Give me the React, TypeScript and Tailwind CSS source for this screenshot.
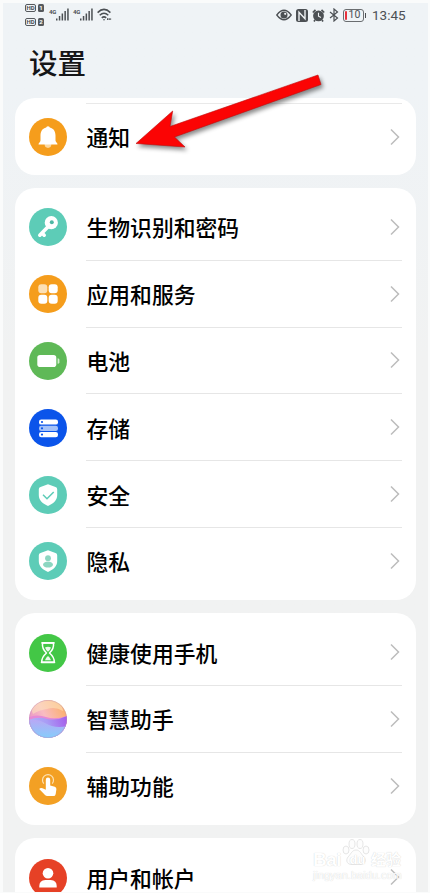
import React from 'react';

const BellIcon = () => (
  <svg viewBox="0 0 38 38" className="size-full">
    <circle cx="19" cy="19" r="19" fill="#f59d1c" />
    <circle cx="19" cy="26.6" r="3.3" fill="#fbd9a2" />
    <circle cx="19" cy="10" r="1.8" fill="#fff" />
    <path d="M19 9.3c-4.8 0-7.5 3.6-7.5 8.1v5c0 1.5-2 2.2-2 4h19c0-1.8-2-2.500-2-4v-5c0-4.500-2.700-8.100-7.500-8.100z" fill="#fff" />
  </svg>
);

const KeyIcon = () => (
  <svg viewBox="0 0 38 38" className="size-full">
    <circle cx="19" cy="19" r="19" fill="#5dccb7" />
    <path d="M19 18.7L10.800 27.2M13 25l2.2 2.2" stroke="#fff" strokeWidth="3.6" strokeLinecap="round" fill="none" />
    <circle cx="22.3" cy="14.7" r="6.6" fill="#fff" />
    <circle cx="22.8" cy="14.3" r="2" fill="#4fb7a4" />
  </svg>
);

const AppsIcon = () => (
  <svg viewBox="0 0 38 38" className="size-full">
    <circle cx="19" cy="19" r="19" fill="#f59d1c" />
    <rect x="9.3" y="9.3" width="9" height="9" rx="3" fill="#fce0b4" />
    <rect x="19.7" y="9.3" width="9" height="9" rx="3" fill="#fff" />
    <rect x="9.3" y="19.7" width="9" height="9" rx="3" fill="#fff" />
    <rect x="19.7" y="19.7" width="9" height="9" rx="3" fill="#fff" />
  </svg>
);

const BatteryIcon = () => (
  <svg viewBox="0 0 38 38" className="size-full">
    <circle cx="19" cy="19" r="19" fill="#5fb957" />
    <rect x="8.3" y="13" width="19" height="12" rx="2.8" fill="#fff" />
    <path d="M28.6 16.2q1.8 0 1.8 1.5v2.6q0 1.5-1.8 1.5z" fill="#d3edcf" />
  </svg>
);

const StorageIcon = () => (
  <svg viewBox="0 0 38 38" className="size-full">
    <circle cx="19" cy="19" r="19" fill="#0b54ea" />
    <rect x="10" y="10.4" width="19" height="5.2" rx="2.2" fill="#fff" />
    <rect x="10" y="16.7" width="19" height="5.2" rx="2.2" fill="#a5c2f8" />
    <rect x="10" y="23" width="19" height="5.2" rx="2.2" fill="#fff" />
    <circle cx="13" cy="13" r="1.1" fill="#0b54ea" />
    <circle cx="13" cy="19.3" r="1.1" fill="#0b54ea" />
    <circle cx="13" cy="25.6" r="1.1" fill="#0b54ea" />
  </svg>
);

const SecurityIcon = () => (
  <svg viewBox="0 0 38 38" className="size-full">
    <circle cx="19" cy="19" r="19" fill="#5dccb7" />
    <path d="M19 8.3l7.5 2.7q1.7.6 1.7 2.3v6c0 5-4 8.5-9.2 10.7-5.2-2.2-9.2-5.700-9.200-10.700v-6q0-1.700 1.700-2.300z" fill="#fff" />
    <path d="M14 18.8l4 4 6.700-6.900" stroke="#5dccb7" strokeWidth="1.5" fill="none" />
  </svg>
);

const PrivacyIcon = () => (
  <svg viewBox="0 0 38 38" className="size-full">
    <circle cx="19" cy="19" r="19" fill="#5dccb7" />
    <path d="M19 8.3l7.5 2.7q1.7.6 1.7 2.3v6c0 5-4 8.5-9.2 10.7-5.2-2.2-9.2-5.700-9.200-10.700v-6q0-1.700 1.700-2.300z" fill="#fff" />
    <circle cx="19" cy="16.2" r="2.9" fill="#8cd6c1" />
    <ellipse cx="19" cy="22.6" rx="5" ry="3" fill="#8cd6c1" />
  </svg>
);

const HourglassIcon = () => (
  <svg viewBox="0 0 38 38" className="size-full">
    <circle cx="19" cy="19" r="19" fill="#43c746" />
    <path d="M13.5 9h11q.6 6-4 10 4.800 4 4.800 9.300H12.700Q12.700 23 17.500 19q-4.600-4-4-10z" fill="none" stroke="#fff" strokeWidth="1.5" strokeLinejoin="round" />
    <path d="M16 13.5q3-1.500 6 0-.8 2.600-3 4.300-2.200-1.700-3-4.300zM16 26.300q1-3 3-4.300 2 1.300 3 4.300z" fill="#e8faea" />
    <path d="M13 8.900h12M12.500 28.400h13" stroke="#fff" strokeWidth="1.6" strokeLinecap="round" />
  </svg>
);

const AssistantIcon = () => (
  <svg viewBox="0 0 38 38" className="size-full">
    <defs>
      <linearGradient id="sky" x1="0" y1="0.7" x2="1" y2="0.2">
        <stop offset="0" stopColor="#e78fc6" />
        <stop offset="0.45" stopColor="#f9bcc2" />
        <stop offset="1" stopColor="#fcae62" />
      </linearGradient>
      <linearGradient id="sea" x1="0" y1="0.5" x2="1" y2="0.3">
        <stop offset="0" stopColor="#b3b4f8" />
        <stop offset="0.5" stopColor="#a99cf5" />
        <stop offset="1" stopColor="#a561ec" />
      </linearGradient>
      <linearGradient id="foam" x1="0" y1="0" x2="0" y2="1">
        <stop offset="0" stopColor="#b9a8f5" />
        <stop offset="1" stopColor="#84cdfb" />
      </linearGradient>
      <clipPath id="ball">
        <circle cx="19" cy="19" r="19" />
      </clipPath>
    </defs>
    <g clipPath="url(#ball)">
      <rect width="38" height="38" fill="url(#sky)" />
      <path d="M2 9Q14-4 30 3q4 4 4 8-8-5-16-2-8 1-14 5z" fill="#fde8bb" opacity=".55" />
      <path d="M0 17q8-3 17 0t21-1v23H0z" fill="#e58ad6" />
      <path d="M0 20q9-4 18-1 10 2 20-3v22H0z" fill="url(#sea)" />
      <path d="M0 21q8-3 16 2 10 6 22 3v12H0z" fill="url(#foam)" />
    </g>
    <circle cx="19" cy="19" r="18.6" fill="none" stroke="#b891b8" strokeWidth=".7" opacity=".5" />
  </svg>
);

const TouchIcon = () => (
  <svg viewBox="0 0 38 38" className="size-full">
    <circle cx="19" cy="19" r="19" fill="#f3a024" />
    <path d="M14.8 16.7a5.500 5.500 0 1 1 8.400 0" fill="none" stroke="#fde2b5" strokeWidth="1.2" />
    <path d="M16.8 12.800a2.200 2.200 0 0 1 4.400 0v5.700l4.600 1.200q1.800.6 1.600 2.500l-.7 4.700q-.3 2.200-2.300 2.200h-6.100q-1.400 0-2.300-1l-5.800-6q1.300-1.700 3.300-.8l3.300 1.400z" fill="#fff" />
  </svg>
);

const UserIcon = () => (
  <svg viewBox="0 0 38 38" className="size-full">
    <circle cx="19" cy="19" r="19" fill="#e64126" />
    <circle cx="19" cy="14.3" r="5.3" fill="#fff" />
    <path d="M10.3 28.5v-1.500q0-5.500 6-6h5.400q6 .5 6 6v1.500z" fill="#fff" />
  </svg>
);

const groups = [
  {
    id: 'security',
    items: [
      { label: '生物识别和密码', icon: <KeyIcon /> },
      { label: '应用和服务', icon: <AppsIcon /> },
      { label: '电池', icon: <BatteryIcon /> },
      { label: '存储', icon: <StorageIcon /> },
      { label: '安全', icon: <SecurityIcon /> },
      { label: '隐私', icon: <PrivacyIcon /> }
    ]
  },
  {
    id: 'assist',
    items: [
      { label: '健康使用手机', icon: <HourglassIcon /> },
      { label: '智慧助手', icon: <AssistantIcon /> },
      { label: '辅助功能', icon: <TouchIcon /> }
    ]
  },
  {
    id: 'account',
    items: [{ label: '用户和帐户', icon: <UserIcon /> }]
  }
];

type RowProps = { label: string; icon: React.ReactNode; divider?: boolean };

const Row = ({ label, icon, divider }: RowProps) => (
  <div className="flex h-[66.8px] shrink-0 items-center pl-3.5">
    <div className="size-[38px] shrink-0">{icon}</div>
    <div className={`ml-[19px] mr-3.5 flex h-full flex-1 items-center justify-between border-b pl-px ${divider ? 'border-[#e6e6e6]' : 'border-transparent'}`}>
      <span className="pt-px text-[21.8px] font-medium leading-8 text-black">{label}</span>
      <svg width="12" height="18" viewBox="0 0 12 18" className="mr-px">
        <path d="M2 1.5L9.500 9 2 16.5" fill="none" stroke="#bcbcbc" strokeWidth="1.5" />
      </svg>
    </div>
  </div>
);

const Signal = () => (
  <div className="flex w-5">
    <span className="mt-px w-[7px] text-[6px] font-bold leading-[6px] tracking-tighter">4G</span>
    <svg width="13" height="13" viewBox="0 0 13 13" fill="#4c5054" className="shrink-0">
      <rect x="0" y="10.5" width="1.5" height="2" />
      <rect x="2.8" y="8" width="1.5" height="4.5" />
      <rect x="5.6" y="5.5" width="1.5" height="7" />
      <rect x="8.4" y="3" width="1.5" height="9.500" />
      <rect x="11.2" y="0.5" width="1.5" height="12" />
    </svg>
  </div>
);

const HdBadge = ({ sim }: { sim: string }) => (
  <div className="flex gap-[2px] text-[6px] font-bold leading-[6px]">
    <span className="flex h-2 w-[11px] items-center justify-center rounded-[2px] border border-[#55595d]">HD</span>
    <span className="flex h-2 w-[6px] items-center justify-center rounded-[1.5px] bg-[#55595d] text-white">{sim}</span>
  </div>
);

const StatusBar = () => (
  <div className="flex h-[31px] items-start justify-between pl-[25px] pr-[25px] font-['Roboto','Liberation_Sans',sans-serif] text-[#4c5054]">
    <div className="flex">
      <div className="flex flex-col gap-[6px] pt-1">
        <HdBadge sim="1" />
        <HdBadge sim="2" />
      </div>
      <div className="ml-[5px] flex gap-1 pt-2">
        <Signal />
        <Signal />
      </div>
      <svg width="16" height="14" viewBox="0 0 16 14" className="ml-[4px] mt-[8px]" fill="none" stroke="#4c5054" strokeWidth="1.5">
        <path d="M.6 4.600q6.400-6.400 12.800 0M2.700 7.300q4.300-4.200 8.600 0M4.800 9.900q2.200-2.100 4.400 0" />
        <circle cx="7" cy="11.8" r=".8" fill="#4c5054" stroke="none" />
        <path d="M10 11.2h4.500" strokeWidth="1.8" strokeDasharray="1.5 .7" />
      </svg>
    </div>
    <div className="flex items-center pt-[7px]">
      <svg width="16" height="12" viewBox="0 0 16 12">
        <path d="M.8 6Q8-3.500 15.200 6 8 15.500.8 6z" fill="none" stroke="#4c5054" strokeWidth="1.3" />
        <circle cx="8" cy="6" r="3.5" fill="#4c5054" />
        <circle cx="9.2" cy="4.8" r="1.1" fill="#f0f3f5" />
      </svg>
      <svg width="12" height="13" viewBox="0 0 12 13" className="ml-[4px]">
        <rect width="12" height="13" rx="2.5" fill="#4c5054" />
        <path d="M3 12V3.200l6 6.600V1" fill="none" stroke="#f0f3f5" strokeWidth="1.4" />
      </svg>
      <svg width="13" height="13" viewBox="0 0 13 13" className="ml-[4px]">
        <path d="M.8 3.500L3.500.9M12.200 3.500L9.500.9M3 11l-1 1.400M10 11l1 1.400" stroke="#4c5054" strokeWidth="1.7" />
        <circle cx="6.5" cy="6.900" r="5.400" fill="#4c5054" />
        <path d="M6.500 3.800v3.400l2.500 1.300" fill="none" stroke="#f0f3f5" strokeWidth="1.1" />
      </svg>
      <svg width="10" height="14" viewBox="0 0 10 14" className="ml-[4px]" fill="none" stroke="#4c5054" strokeWidth="1.2">
        <path d="M1 4l7.500 6L5 13V1l3.500 3L1 10" />
      </svg>
      <div className="ml-[4px] flex h-[13px] w-[21px] items-center rounded-[3px] border border-[#6a6d70] pl-px">
        <span className="h-[9px] w-[2px] rounded-sm bg-[#e8323c]" />
        <span className="ml-[2px] pt-px text-[10.5px] leading-none">10</span>
      </div>
      <span className="ml-px h-[5px] w-[1.5px] bg-[#4c5054]" />
      <span className="ml-[6px] w-[33px] whitespace-nowrap text-[13.5px] leading-4">13:45</span>
    </div>
  </div>
);

const PointerArrow = () => (
  <svg width="200" height="90" viewBox="0 0 200 90" className="absolute left-[130px] top-[68px] drop-shadow-[2px_3px_2px_rgba(0,0,0,0.45)]">
    <path d="M6 75.500L42.700 43l-2.700 15.500L188 7l3 9.500L44.500 69l10.500 10z" fill="#fb0404" stroke="#c00c0c" strokeWidth=".6" />
  </svg>
);

const Watermark = () => (
  <div className="absolute left-[313px] top-[838px] w-[92px] font-['Liberation_Sans','Noto_Sans_CJK_SC',sans-serif] text-white [text-shadow:0_0_1px_#c8c8c8]">
    <svg width="28" height="28" viewBox="0 0 28 28" className="absolute left-[29px] top-0" fill="#fdfdfd" stroke="#e0e0e0" strokeWidth=".8">
      <ellipse cx="4" cy="12" rx="3" ry="4" />
      <ellipse cx="10" cy="6" rx="3" ry="4.5" />
      <ellipse cx="18" cy="6" rx="3" ry="4.5" />
      <ellipse cx="24" cy="12" rx="3" ry="4" />
      <path d="M14 12c-4 0-5 4-8 7-3 4 0 8 4 7.500h8c4 .5 7-3.500 4-7.500-3-3-4-7-8-7z" />
    </svg>
    <div className="relative flex items-end whitespace-nowrap pt-[13px] font-bold leading-[17px]">
      <span className="w-[31px] text-[19px] tracking-tight">Bai</span>
      <span className="w-[27px] text-center text-[13px]">du</span>
      <span className="text-[15px]">经验</span>
    </div>
    <div className="whitespace-nowrap text-[11px] leading-[14px]">jingyan.baidu.com</div>
  </div>
);

export default function App() {
  return (
    <div className="relative h-[893px] w-[430px] overflow-hidden bg-[#fafbfb] px-[2.5px] pt-[3px] font-['Noto_Sans_CJK_SC',sans-serif]">
      <div className="flex h-[889px] flex-col overflow-hidden bg-gradient-to-b from-[#eff3f6] from-10% to-[#f1f2f2] to-40%">
        <div className="-mx-[2.5px] -mt-[3px] shrink-0">
          <StatusBar />
          <h1 className="h-[67px] pl-[29px] pt-[9px] text-[28.5px] font-medium leading-[44px] text-[#151618]">设置</h1>
        </div>
        <div className="mx-3 flex flex-col gap-[13.5px]">
          <section className="h-[76.5px] shrink-0 rounded-[20px] bg-white pt-[5px]">
            <div className="ml-[71px] mr-3.5 h-px bg-[#e9e9e9]" />
            <Row label="通知" icon={<BellIcon />} />
          </section>
          {groups.map((group) => (
            <section key={group.id} className="shrink-0 rounded-[20px] bg-white pb-[5px] pt-[6px]">
              {group.items.map((item, i) => (
                <Row key={item.label} label={item.label} icon={item.icon} divider={i < group.items.length - 1} />
              ))}
            </section>
          ))}
        </div>
      </div>
      <Watermark />
      <PointerArrow />
    </div>
  );
}
